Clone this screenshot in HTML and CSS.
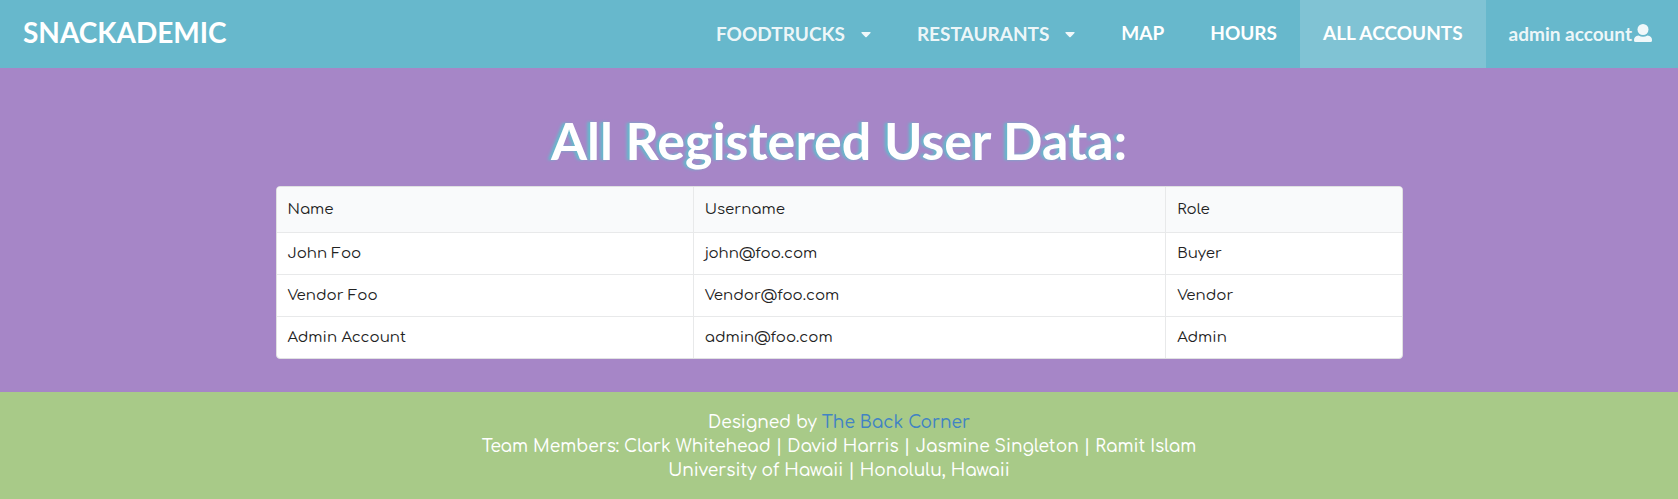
FILE: index.html
```html
<!DOCTYPE html>
<html lang="en">
<head>
<meta charset="utf-8">
<title>Snackademic</title>
<meta name="viewport" content="width=device-width, initial-scale=1">
<link rel="stylesheet" href="styles.css">
</head>
<body>
<header class="navbar">
  <a class="brand" href="#">SNACKADEMIC</a>
  <nav class="menu">
    <button class="item dropdown" type="button">FOODTRUCKS<svg class="caret" viewBox="0 0 10 6" aria-hidden="true"><path d="M1 0h8q1 .2.5 1L5.700 5q-.7.600-1.400 0L.5 1Q0 .2 1 0z"/></svg></button>
    <button class="item dropdown" type="button">RESTAURANTS<svg class="caret" viewBox="0 0 10 6" aria-hidden="true"><path d="M1 0h8q1 .2.5 1L5.700 5q-.7.600-1.400 0L.5 1Q0 .2 1 0z"/></svg></button>
    <a class="item" href="#">MAP</a>
    <a class="item" href="#">HOURS</a>
    <a class="item active" href="#" aria-current="page">ALL ACCOUNTS</a>
    <button class="item dropdown account" type="button">admin account<svg class="user" viewBox="0 0 18 18" aria-hidden="true"><circle cx="9" cy="5.500" r="5.500"/><path d="M4.500 11.500q4.500 2.500 9 0Q18 12 18 16v.5q0 1.500-1.500 1.500h-15Q0 18 0 16.500V16q0-4 4.500-4.500z"/></svg></button>
  </nav>
</header>
<main class="content">
  <h1 class="title">All Registered User Data:</h1>
  <table class="users">
    <colgroup><col class="col-name"><col class="col-username"><col class="col-role"></colgroup>
    <thead>
      <tr><th scope="col">Name</th><th scope="col">Username</th><th scope="col">Role</th></tr>
    </thead>
    <tbody>
      <tr><td>John Foo</td><td>john@foo.com</td><td>Buyer</td></tr>
      <tr><td>Vendor Foo</td><td>Vendor@foo.com</td><td>Vendor</td></tr>
      <tr><td>Admin Account</td><td>admin@foo.com</td><td>Admin</td></tr>
    </tbody>
  </table>
</main>
<footer class="footer">
  <div>Designed by <a class="credit" href="#">The Back Corner</a></div>
  <div>Team Members: Clark Whitehead | David Harris | Jasmine Singleton | Ramit Islam</div>
  <div>University of Hawaii | Honolulu, Hawaii</div>
</footer>
</body>
</html>
```
FILE: styles.css
```css
* { box-sizing: border-box; }

body {
  margin: 0;
  min-height: 100vh;
  display: flex;
  flex-direction: column;
  background: #a8ca88;
  font-family: Comfortaa, Lato, sans-serif;
  color: #222;
}

.navbar {
  display: flex;
  justify-content: space-between;
  min-height: 68px;
  padding-right: 3px;
  background: #67b8cc;
  font-family: Lato, sans-serif;
}

.brand {
  display: flex;
  align-items: center;
  padding: 0 23px 4px;
  color: #fff;
  font-size: 28px;
  font-weight: 700;
  text-decoration: none;
}

.menu { display: flex; }

.item {
  display: flex;
  align-items: center;
  padding: 0 23px 4px;
  border: 0;
  background: none;
  color: #fff;
  font-family: inherit;
  font-size: 19px;
  font-weight: 700;
  text-decoration: none;
  white-space: nowrap;
}

.dropdown {
  padding-bottom: 2px;
  color: rgba(255, 255, 255, 0.9);
  cursor: pointer;
}

.active { background: #80c3d4; }

.caret {
  width: 10px;
  height: 6px;
  margin: 4px 0 0 16px;
  fill: currentColor;
}

.user {
  width: 18px;
  height: 18px;
  margin-left: 2px;
  fill: currentColor;
}

.content {
  padding: 40px 20px 33px;
  background: #a686c7;
}

.title {
  margin: 0 0 14px;
  color: #fff;
  font-family: Lato, sans-serif;
  font-size: 52px;
  font-weight: 700;
  line-height: 64px;
  text-align: center;
  text-shadow: -3px 0 3px #67b8cc;
}

.users {
  width: 100%;
  max-width: 1127px;
  margin: 0 auto;
  table-layout: fixed;
  border: 1px solid #e0e1e2;
  border-radius: 4px;
  border-spacing: 0;
  background: #fff;
  font-size: 15px;
  line-height: 19px;
  overflow: hidden;
}

.col-name { width: 37%; }
.col-username { width: 42%; }
.col-role { width: 21%; }

.users th,
.users td {
  padding: 11px;
  border-left: 1px solid #e8e9ea;
  font-weight: 400;
  text-align: left;
}

.users th {
  padding: 13px 11px;
  background: #f9fafb;
}

.users td { border-top: 1px solid #e8e9ea; }

.users th:first-child,
.users td:first-child { border-left: 0; }

.footer {
  padding: 19px 20px 16px;
  background: #a8ca88;
  color: #fff;
  font-size: 17px;
  font-weight: 500;
  line-height: 24px;
  text-align: center;
}

.credit {
  color: #4183c4;
  text-decoration: none;
}
```
